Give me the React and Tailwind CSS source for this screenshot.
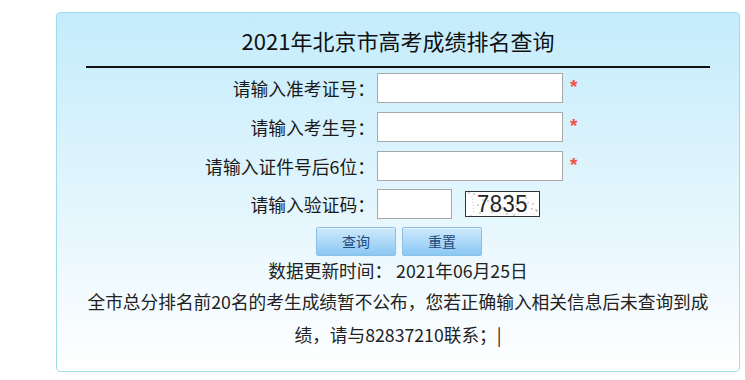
import React from "react";

const font = { fontFamily: '"Noto Sans CJK SC", "Noto Sans", sans-serif' };

function Row({ label, children }) {
  return (
    <div className="flex items-center h-[30px]">
      <div className="w-[318px] text-right text-[17.8px] leading-[30px] text-[#1a1a1a] whitespace-nowrap">{label}</div>
      <div className="ml-[2px] flex items-center">{children}</div>
    </div>
  );
}

function Star() {
  return (
    <span
      className="ml-[7px] self-start mt-[4px] text-[19px] leading-[19px] font-bold text-[#f0524a]"
      style={{ fontFamily: '"Liberation Sans", sans-serif' }}
    >
      *
    </span>
  );
}

function Captcha() {
  const dots = [];
  const seed = [3, 17, 29, 41, 53, 67, 71, 8, 22, 36, 48, 60, 12, 26, 44, 58, 66, 5, 33, 50, 14, 39, 62, 70];
  for (let i = 0; i < seed.length; i++) {
    dots.push(<circle key={i} cx={seed[i]} cy={(i * 7) % 24 + 1} r="0.7" fill="#888" />);
  }
  return (
    <div className="relative ml-[13px] w-[75px] h-[26px] border border-[#333] bg-white overflow-hidden">
      <div
        className="absolute inset-0 flex items-center justify-center text-[22px] leading-[26px] tracking-[0.5px] text-[#222] scale-y-110"
        style={{ fontFamily: '"Liberation Sans", sans-serif' }}
      >
        7835
      </div>
      <svg className="absolute inset-0" width="75" height="26" viewBox="0 0 75 26">
        {dots}
        <line x1="6" y1="4" x2="8" y2="22" stroke="#aaa" strokeWidth="0.6" strokeDasharray="1 2" />
        <line x1="10" y1="21" x2="70" y2="22" stroke="#ccc" strokeWidth="0.6" strokeDasharray="1 2" />
      </svg>
    </div>
  );
}

function Btn({ children }) {
  return (
    <button className="w-[80px] h-[29px] rounded-[2px] border border-[#8cc0e6] bg-[linear-gradient(to_bottom,#cfeafc,#8ac7f3)] text-[14px] text-[#1d4a7c] leading-[27px] shadow-[inset_0_1px_0_#e8f5fe]">
      {children}
    </button>
  );
}

export default function App() {
  return (
    <div className="w-[745px] h-[380px] bg-white" style={font}>
      <div className="ml-[56px] pt-[12px]">
        <div className="w-[684px] h-[360px] rounded-[4px] border border-[#9fdcee] bg-[linear-gradient(to_bottom,#c4ecfc,#e4f6fd_55%,#ffffff)] flex flex-col">
          <div className="pt-[13px] h-[41px] text-center text-[22px] leading-[28px] text-[#111]">2021年北京市高考成绩排名查询</div>
          <div className="mt-[12px] mx-[29px] h-[2px] bg-[#111]" />
          <div className="mt-[5px] flex flex-col gap-[9px]">
            <Row label="请输入准考证号：">
              <input className="w-[186px] h-[30px] border border-[#a8a8a8] bg-white" />
              <Star />
            </Row>
            <Row label="请输入考生号：">
              <input className="w-[186px] h-[30px] border border-[#a8a8a8] bg-white" />
              <Star />
            </Row>
            <Row label="请输入证件号后6位：">
              <input className="w-[186px] h-[30px] border border-[#a8a8a8] bg-white" />
              <Star />
            </Row>
          </div>
          <div className="mt-[8px]">
            <Row label="请输入验证码：">
              <input className="w-[75px] h-[30px] border border-[#a8a8a8] bg-white" />
              <Captcha />
            </Row>
          </div>
          <div className="mt-[8px] pl-[259px] flex gap-[6px]">
            <Btn>查询</Btn>
            <Btn>重置</Btn>
          </div>
          <div className="mt-[2px] text-center text-[17.7px] leading-[24px] text-[#222]">数据更新时间： 2021年06月25日</div>
          <div className="mt-[3px] text-center text-[17.7px] leading-[33px] text-[#222]">
            全市总分排名前20名的考生成绩暂不公布，您若正确输入相关信息后未查询到成
            <br />
            绩，请与82837210联系；|
          </div>
        </div>
      </div>
    </div>
  );
}
